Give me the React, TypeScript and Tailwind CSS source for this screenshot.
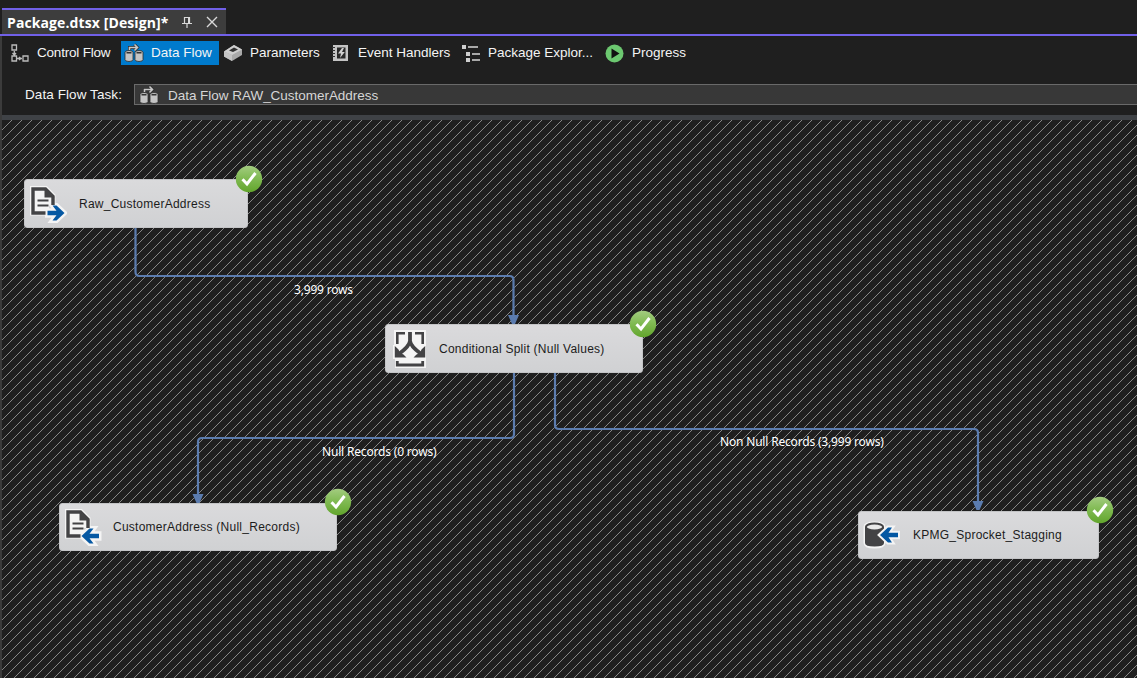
import React from "react";

const Check = ({ className }: { className: string }) => (
  <svg className={`absolute size-7 ${className}`} viewBox="0 0 28 28">
    <defs>
      <linearGradient id="ok" x1="0" y1="0" x2="0" y2="1">
        <stop offset="0" stopColor="#a3cc80" />
        <stop offset="0.45" stopColor="#82bb55" />
        <stop offset="1" stopColor="#62a52c" />
      </linearGradient>
    </defs>
    <circle cx="14" cy="14" r="13.2" fill="url(#ok)" />
    <path d="M7.500 14.200 L12 19 L20.500 8" fill="none" stroke="#fff" strokeWidth="3" />
  </svg>
);

const FileIcon = ({ left }: { left?: boolean }) => {
  const doc = "M3 3 H17 L24.5 10.500 V18 H18 V28.5 H3 Z";
  const arrow = left
    ? "M17.500 28 L25.500 20.500 H29.500 L25.500 25.700 H35 V30.300 H25.500 L29.500 35.500 H25.500 Z"
    : "M35.500 28 L27.500 20.500 H23.500 L27.500 25.700 H18.500 V30.300 H27.500 L23.500 35.500 H27.500 Z";
  return (
    <svg className="h-[38px] w-[38px] shrink-0" viewBox="0 0 38 38">
      <path d={doc} fill="#f4f4f4" stroke="#f4f4f4" strokeWidth="4" />
      <path d={arrow} fill="#f4f4f4" stroke="#f4f4f4" strokeWidth="5" />
      <path d="M16.500 28 H4 V4 H16.500 L24 11.500 V20" fill="none" stroke="#434345" strokeWidth="3.400" />
      <path d="M15.500 3 V12.500 H25.500 Z" fill="#434345" />
      <path d="M8.500 15.500 H19.500 M8.500 20.500 H19.500" stroke="#434345" strokeWidth="2" />
      <path d={arrow} fill="#0558a3" />
    </svg>
  );
};

const SplitIcon = () => (
  <svg className="h-[40px] w-[34px] shrink-0" viewBox="0 0 34 40">
    <path d="M1 1 H33 V39 H2 V30 H0 V16 H1 Z" fill="#f4f4f4" />
    <g fill="none" stroke="#434345">
      <path d="M12 4.300 H4.300 V15 M22 4.300 H29.700 V15" strokeWidth="2.600" />
      <path d="M4.300 32 V36 H29.700 V32" strokeWidth="2.800" />
      <path d="M17 3 V12 Q16.500 17 6.500 24.500 M17 12 Q17.500 17 27.500 24.500" strokeWidth="3.800" />
    </g>
    <path d="M1.800 17 V28.500 H13.500 L10.500 25.500 L7 24 L5.500 20.500 Z M32.200 17 V28.500 H20.500 L23.500 25.500 L27 24 L28.500 20.500 Z" fill="#434345" />
  </svg>
);

const DbIcon = () => {
  const arrow = "M17 15 L25 7.500 H29 L25.500 12.700 H35 V17.300 H25.500 L29 22.500 H25 Z";
  return (
    <svg className="h-[30px] w-[38px] shrink-0" viewBox="0 0 38 30">
      <path d="M2 7 Q2 3 11.500 3 Q21 3 21 7 V23 Q21 27 11.500 27 Q2 27 2 23 Z" fill="#f4f4f4" stroke="#f4f4f4" strokeWidth="3" />
      <path d="M2 7 V23 Q2 26.500 11.500 26.500 Q21 26.500 21 23 V7 Z" fill="#434345" />
      <ellipse cx="11.500" cy="7" rx="8.600" ry="3.500" fill="#e9e9e9" stroke="#434345" strokeWidth="2" />
      <path d={arrow} fill="#f4f4f4" stroke="#f4f4f4" strokeWidth="4" />
      <path d={arrow} fill="#0558a3" />
    </svg>
  );
};

const FlowIcon = () => (
  <svg className="h-[20px] w-[20px] shrink-0" viewBox="0 0 20 20">
    <g fill="#c4c4c4" stroke="#2b2b2b" strokeWidth="0.800">
      <path d="M1 9.500 Q1 7.500 5 7.500 Q9 7.500 9 9.500 V16.500 Q9 18.500 5 18.500 Q1 18.500 1 16.500 Z" />
      <path d="M11 9.500 Q11 7.500 15 7.500 Q19 7.500 19 9.500 V16.500 Q19 18.500 15 18.500 Q11 18.500 11 16.500 Z" />
    </g>
    <path d="M2.500 9.800 H7.500 M12.500 9.800 H17.500" stroke="#333" strokeWidth="1.400" />
    <path d="M5.500 7 V4.500 H13 M10.500 1.500 L13.500 4.500 L10.500 7.500" fill="none" stroke="#2b2b2b" strokeWidth="3" />
    <path d="M5.500 7 V4.500 H13 M10.500 1.500 L13.500 4.500 L10.500 7.500" fill="none" stroke="#c8c8c8" strokeWidth="1.600" />
  </svg>
);

const Node = ({ className, icon, text, textClass }: { className: string; icon: React.ReactNode; text: string; textClass: string }) => (
  <div className={`absolute rounded-[3px] border border-[#c3c4c6] bg-linear-to-b from-[#dadadc] to-[#d0d1d3] text-[12px] tracking-[0.250px] ${className}`}>
    <div className="flex h-full items-center">
      {icon}
      <span className={`whitespace-nowrap text-[#1c1c1c] ${textClass}`}>{text}</span>
    </div>
  </div>
);

export default function App() {
  return (
    <div className="flex h-[678px] w-[1137px] flex-col overflow-hidden bg-[#1f1f1f] font-['Liberation_Sans',sans-serif] text-[13.500px] text-[#f4f4f4]">
      <div className="flex h-9 border-b-2 border-[#7160e8] pt-2 pl-[2px]">
        <div className="flex w-[224px] items-center border-t-2 border-[#7160e8] bg-[#3d3d3d] pl-[5px]">
          <span className="w-[174px] text-[14px] font-bold tracking-[0.100px] whitespace-nowrap text-white font-['Open_Sans','Noto_Sans',sans-serif]">Package.dtsx [Design]*</span>
          <svg className="h-[14px] w-[12px] shrink-0" viewBox="0 0 12 14" fill="none" stroke="#d8d8d8">
            <path d="M3.500 8 V2.500 H8.500 V8 M1 8.500 H11 M6 8.500 V13" strokeWidth="1.200" />
            <path d="M8 2.500 V8" strokeWidth="2" />
          </svg>
          <svg className="ml-[13px] size-[12px] shrink-0" viewBox="0 0 12 12" stroke="#d8d8d8" strokeWidth="1.400">
            <path d="M1 1 L11 11 M11 1 L1 11" />
          </svg>
        </div>
      </div>

      <div className="flex h-[79px] flex-col border-l-2 border-[#3b3b3b]">
        <div className="flex h-[34px] items-center">
          <div className="flex w-[119px] items-center pl-[8px]">
            <svg className="h-[20px] w-[20px]" viewBox="0 0 20 20" fill="none" stroke="#bcbcbc" strokeWidth="1.300">
              <path d="M2 2 H6.500 V7 H2 Z M2 13 H6.500 V18 H2 Z M13 13 H18 V18 H13 Z M4.300 8 V12 M2.500 10 L4.300 12 L6 10 M7 15.500 H12 M9 14 L11 15.500 L9 17" />
            </svg>
            <span className="ml-[7px] tracking-[-0.200px] whitespace-nowrap">Control Flow</span>
          </div>
          <div className="flex h-6 w-[98px] items-center bg-[#007acc] pl-[3px]">
            <FlowIcon />
            <span className="ml-[7px] whitespace-nowrap">Data Flow</span>
          </div>
          <div className="flex w-[113px] items-center pl-[5px]">
            <svg className="h-[18px] w-[19px]" viewBox="0 0 19 18">
              <path d="M0 7.500 L10 1 L18 5.500 V11 L8 17 L0 12.500 Z" fill="#a9a9a9" />
              <path d="M0 7.500 L10 1 L18 5.500 L8 11 Z" fill="#cfcfcf" />
              <path d="M5 6.500 L10 3.500 L14 5.500 L9 8 Z" fill="#303030" />
              <path d="M0 7.500 L8 11 V17 L0 12.500 Z" fill="#c4c4c4" />
            </svg>
            <span className="ml-[7px] whitespace-nowrap">Parameters</span>
          </div>
          <div className="flex w-[130px] items-center">
            <svg className="h-[18px] w-[18px]" viewBox="0 0 18 18">
              <path d="M1 1 H16 V17 H1 Z" fill="#c4c4c4" />
              <path d="M5 3.500 H13.500 V14.500 H5 Z" fill="#292929" />
              <path d="M10 4 L6 9.500 H9 L8 14 L12.800 8 H10 L12 4 Z" fill="#d0d0d0" />
              <path d="M0 3.500 H3 M0 6.500 H3 M0 9.500 H3 M0 12.500 H3" stroke="#333" />
            </svg>
            <span className="ml-[8px] whitespace-nowrap">Event Handlers</span>
          </div>
          <div className="flex w-[143px] items-center">
            <svg className="h-[19px] w-[19px]" viewBox="0 0 19 19">
              <path d="M0 1 H4 V5 H0 Z M4 8 H8 V12 H4 Z M4 14 H8 V18 H4 Z" fill="#cfcfcf" />
              <path d="M6 3 H16 M10 10 H18 M10 16 H18" stroke="#a9a9a9" strokeWidth="1.800" />
            </svg>
            <span className="ml-[7px] whitespace-nowrap">Package Explor...</span>
          </div>
          <div className="flex items-center">
            <svg className="size-[19px]" viewBox="0 0 19 19">
              <circle cx="9.500" cy="9.500" r="9" fill="#6cc870" />
              <path d="M6.500 4.500 L14.500 9.500 L6.500 14.500 Z" fill="#111" />
            </svg>
            <span className="ml-[8px] whitespace-nowrap">Progress</span>
          </div>
        </div>
        <div className="flex h-[45px] pt-[14px] pl-[23px]">
          <span className="w-[109px] pt-[2px] leading-[18px] tracking-[0.080px] whitespace-nowrap">Data Flow Task:</span>
          <div className="flex h-[21px] flex-1 items-center border border-r-0 border-[#6a6a6a] bg-[#383838] pl-[4px] text-[#d6d6d6]">
            <FlowIcon />
            <span className="ml-[9px] pt-[3px] tracking-[-0.030px] whitespace-nowrap">Data Flow RAW_CustomerAddress</span>
          </div>
        </div>
      </div>

      <div className="h-[5px] border-l-2 border-l-[#3b3b3b] bg-[#3f4246]" />
      <div className="relative h-[558px] border-l-2 border-[#3b3b3b]">
        <svg className="absolute top-0 -left-[2px] h-[558px] w-[1137px]" viewBox="0 0 1137 558">
          <defs>
            <pattern id="hatch" width="10" height="10" patternUnits="userSpaceOnUse">
              <path shapeRendering="crispEdges" fill="#868686" d="M0 1h1v1h-1z M1 0h1v1h-1z M2 9h1v1h-1z M3 8h1v1h-1z M4 7h1v1h-1z M5 6h1v1h-1z M6 5h1v1h-1z M7 4h1v1h-1z M8 3h1v1h-1z M9 2h1v1h-1z" />
            </pattern>
          </defs>
          <rect x="2" width="1135" height="558" fill="url(#hatch)" />
          <g fill="none" stroke="#5b7caf" strokeWidth="2.200">
            <path d="M135.500 108 V152 Q135.500 156 139.500 156 H509.500 Q513.500 156 513.500 160 V196" />
            <path d="M514 253 V314 Q514 318 510 318 H202 Q198 318 198 322 V375" />
            <path d="M555 253 V305 Q555 309 559 309 H974 Q978 309 978 313 V382" />
          </g>
          <path d="M508 195 H519 L515 204 H512 Z M192.500 374 H203.500 L199.500 383 H196.500 Z M972.500 381 H983.500 L979.500 390 H976.500 Z" fill="#5b7caf" />
        </svg>

        <div className="text-[12px] text-white font-['Noto_Sans',sans-serif] tracking-[-0.180px] whitespace-nowrap">
          <span className="absolute top-[161px] left-[292px]">3,999 rows</span>
          <span className="absolute top-[323px] left-[320px]">Null Records (0 rows)</span>
          <span className="absolute top-[313px] left-[718px]">Non Null Records (3,999 rows)</span>
        </div>

        <Node className="top-[59px] left-[22px] h-[49px] w-[224px] pl-[4px]" icon={<FileIcon />} text="Raw_CustomerAddress" textClass="ml-[12px]" />
        <Node className="top-[204px] left-[383px] h-[49px] w-[258px] pl-[7px]" icon={<SplitIcon />} text="Conditional Split (Null Values)" textClass="ml-[12px]" />
        <Node className="top-[383px] left-[57px] h-[48px] w-[278px] pl-[4px]" icon={<FileIcon left />} text="CustomerAddress (Null_Records)" textClass="ml-[11px]" />
        <Node className="top-[391px] left-[856px] h-[48px] w-[241px] pl-[4px]" icon={<DbIcon />} text="KPMG_Sprocket_Stagging" textClass="ml-[12px]" />
        <Check className="top-[45px] left-[233px]" />
        <Check className="top-[190px] left-[627px]" />
        <Check className="top-[368px] left-[322px]" />
        <Check className="top-[376px] left-[1084px]" />
      </div>
    </div>
  );
}
